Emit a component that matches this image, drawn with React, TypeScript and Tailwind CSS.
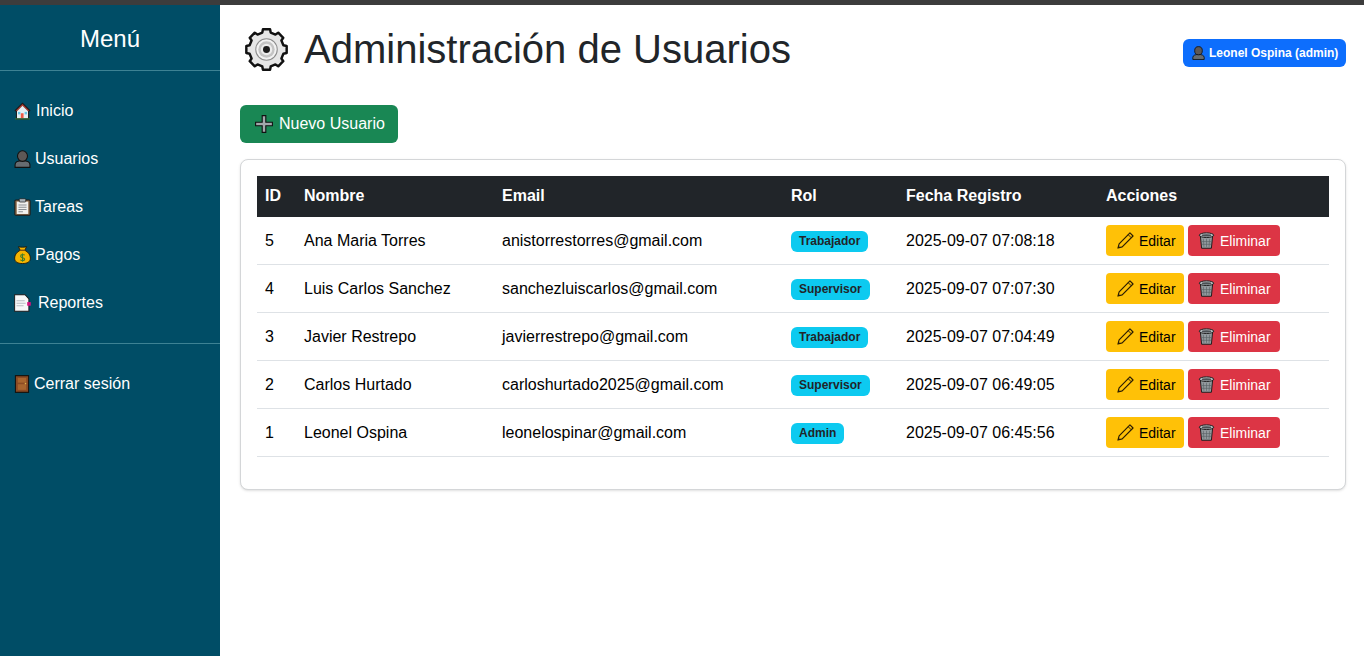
import React from 'react';

type IconProps = { className?: string };

const House = ({ className }: IconProps) => (
  <svg viewBox="0 0 16 16" preserveAspectRatio="none" className={className}>
    <path d="M8 .4 .4 7.6 1.8 8.6V15.6H14.2V8.6L15.6 7.6Z" fill="#1b1b1b" />
    <path d="M8 1.8 1.8 7.6 2.8 8.2 8 3.4 13.2 8.2 14.2 7.6Z" fill="#b23a2e" />
    <path d="M2.8 8.2 8 3.4 13.2 8.2V14.6H2.8Z" fill="#e4eef2" />
    <rect x="6.4" y="10" width="2.6" height="4.6" fill="#ef5a45" />
    <rect x="3.8" y="8.8" width="2.2" height="2.2" fill="#66c6e6" />
    <rect x="10" y="8.8" width="2.2" height="2.2" fill="#66c6e6" />
    <rect x="1" y="14.4" width="14" height="1.2" fill="#2f6b3a" />
  </svg>
);

const Bust = ({ className }: IconProps) => (
  <svg viewBox="0 0 16 16" preserveAspectRatio="none" className={className}>
    <path d="M1 15.4V13C1 10.8 4 9.6 8 9.6S15 10.8 15 13V15.4Z" fill="#666c71" stroke="#111" strokeWidth="1" />
    <circle cx="8" cy="5.4" r="4.7" fill="#5d5856" stroke="#111" strokeWidth="1" />
  </svg>
);

const Clipboard = ({ className }: IconProps) => (
  <svg viewBox="0 0 16 16" preserveAspectRatio="none" className={className}>
    <rect x=".8" y="1.8" width="14.4" height="13.6" rx="1" fill="#8a6a4a" stroke="#1a1a1a" strokeWidth="0.9" />
    <rect x="2.6" y="3.2" width="10.8" height="11" fill="#f1f1ee" />
    <rect x="5" y=".6" width="6" height="3" rx=".6" fill="#a9b2b8" stroke="#1a1a1a" strokeWidth="0.6" />
    <path d="M4.2 6.2H11.8M4.2 8.2H11.8M4.2 10.2H11.8M4.2 12.2H8.4" stroke="#8b9094" strokeWidth="1" />
  </svg>
);

const MoneyBag = ({ className }: IconProps) => (
  <svg viewBox="0 0 16 16" preserveAspectRatio="none" className={className}>
    <path d="M4.2 .6 5.8 3.8C2.2 5.6 .6 8.2 .6 10.8 .6 14.2 3.6 15.6 8 15.6S15.4 14.2 15.4 10.8C15.4 8.2 13.8 5.6 10.2 3.8L11.8 .6C9.6 1.2 6.4 1.2 4.2 .6Z" fill="#f4b400" stroke="#1c1408" strokeWidth="0.8" />
    <path d="M5.4 3.8H10.6" stroke="#7a4d12" strokeWidth="1.2" />
    <path d="M10 8.2C9.4 7.4 6.2 7.2 6.2 9 6.2 10.8 10 10 10 11.8 10 13.4 6.6 13.2 6 12.2M8 6.6V14" fill="none" stroke="#3f7d2c" strokeWidth="1" />
  </svg>
);

const Memo = ({ className }: IconProps) => (
  <svg viewBox="0 0 16 16" preserveAspectRatio="none" className={className}>
    <path d="M.6 .6H10.4L14 4.4V15.4H.6Z" fill="#f8f8f8" stroke="#1a1a1a" strokeWidth="0.9" />
    <path d="M2.4 6H10M2.4 8.2H11M2.4 10.4H9" stroke="#b9bdc2" strokeWidth="1" />
    <rect x="12.4" y="7.2" width="3.4" height="3.2" fill="#d6127e" />
  </svg>
);

const Door = ({ className }: IconProps) => (
  <svg viewBox="0 0 16 16" preserveAspectRatio="none" className={className}>
    <rect x="1.4" y=".6" width="13.2" height="14.8" fill="#8a4a24" stroke="#14100c" strokeWidth="1" />
    <rect x="3.8" y="2.6" width="8.4" height="4.2" fill="#a8652f" />
    <rect x="3.8" y="8.2" width="8.4" height="5" fill="#a8652f" />
    <rect x="10.8" y="7" width="1.4" height="1.2" fill="#e4b54a" />
  </svg>
);

// 8 dientes alrededor del centro (21, 21)
const gearPoints = Array.from({ length: 8 }, (_, k) => k * 45).flatMap((deg) =>
  [[17, -14], [20, -10], [20, 10], [17, 14]].map(([r, off]) => {
    const a = ((deg + off) * Math.PI) / 180;
    return `${(21 + r * Math.sin(a)).toFixed(2)},${(21 - r * Math.cos(a)).toFixed(2)}`;
  })
);

const Gear = ({ className }: IconProps) => (
  <svg viewBox="0 0 42 42" className={className}>
    <polygon points={gearPoints.join(' ')} fill="#e6e6e6" stroke="#111" strokeWidth="2.4" strokeLinejoin="round" />
    <circle cx="21" cy="21" r="10.5" fill="#f2f2f2" stroke="#8c8c8c" strokeWidth="1" />
    <circle cx="21" cy="21" r="8" fill="#c4c4c4" />
    <circle cx="21" cy="21" r="5.6" fill="#ececec" />
    <circle cx="21" cy="21" r="3.4" fill="#1c1c1c" />
  </svg>
);

const Plus = ({ className }: IconProps) => (
  <svg viewBox="0 0 18 18" className={className}>
    <path d="M7.2 .6H10.8V7.2H17.4V10.8H10.8V17.4H7.2V10.8H.6V7.2H7.2Z" fill="#a3a8ab" stroke="#111" strokeWidth="1.1" />
  </svg>
);

const Pencil = ({ className }: IconProps) => (
  <svg viewBox="0 0 16 16" className={className}>
    <path d="M12.2 .9 15.1 3.8 4.9 14 .9 15.1 2 11.1Z" fill="#ffc107" stroke="#2a1c04" strokeWidth="1.1" strokeLinejoin="round" />
    <path d="M10.6 2.6 13.4 5.4" stroke="#2a1c04" strokeWidth="0.9" />
    <path d="M.9 15.1 1.5 12.9 3.1 14.5Z" fill="#2a1c04" />
  </svg>
);

const Trash = ({ className }: IconProps) => (
  <svg viewBox="0 0 16 16" className={className}>
    <path d="M2.2 3.6 3.4 15.3H12.6L13.8 3.6Z" fill="#929a9e" stroke="#1a1a1a" strokeWidth="0.9" />
    <ellipse cx="8" cy="3" rx="6.8" ry="2.2" fill="#b3babe" stroke="#1a1a1a" strokeWidth="0.9" />
    <ellipse cx="8" cy="3.2" rx="4.4" ry="1" fill="#4a5054" />
    <path d="M5 6.4 5.6 14M8 6.4V14M11 6.4 10.4 14M3.4 9H12.6M3.6 11.6H12.4" stroke="#5a6165" strokeWidth="0.6" />
  </svg>
);

const menuItems = [
  { label: 'Inicio', icon: House, gapClass: 'ml-[5px]' },
  { label: 'Usuarios', icon: Bust, gapClass: 'ml-[4px]' },
  { label: 'Tareas', icon: Clipboard, gapClass: 'ml-[4px]' },
  { label: 'Pagos', icon: MoneyBag, gapClass: 'ml-[4px]' },
  { label: 'Reportes', icon: Memo, gapClass: 'ml-[7px]' },
];

const users = [
  { id: 5, name: 'Ana Maria Torres', email: 'anistorrestorres@gmail.com', role: 'Trabajador', date: '2025-09-07 07:08:18' },
  { id: 4, name: 'Luis Carlos Sanchez', email: 'sanchezluiscarlos@gmail.com', role: 'Supervisor', date: '2025-09-07 07:07:30' },
  { id: 3, name: 'Javier Restrepo', email: 'javierrestrepo@gmail.com', role: 'Trabajador', date: '2025-09-07 07:04:49' },
  { id: 2, name: 'Carlos Hurtado', email: 'carloshurtado2025@gmail.com', role: 'Supervisor', date: '2025-09-07 06:49:05' },
  { id: 1, name: 'Leonel Ospina', email: 'leonelospinar@gmail.com', role: 'Admin', date: '2025-09-07 06:45:56' },
];

export default function App() {
  return (
    <div className="h-[656px] overflow-hidden flex flex-col bg-white font-['Liberation_Sans',Arial,sans-serif] text-[#212529]">
      <div className="h-[5px] shrink-0 bg-[#3c3c3c]" />
      <div className="flex flex-1 min-h-0">
        <aside className="w-[220px] shrink-0 bg-[#004d66] text-white">
          <div className="h-[66px] border-b border-[#3d8294] text-center text-2xl leading-[67px]">Menú</div>
          <nav className="pt-4 pb-4 border-b border-[#3d8294]">
            {menuItems.map((item) => (
              <a key={item.label} className="flex items-center h-12 pl-[14px] text-base">
                <item.icon className="w-[17px] h-[18px] shrink-0" />
                <span className={item.gapClass}>{item.label}</span>
              </a>
            ))}
          </nav>
          <a className="flex items-center h-12 mt-4 pl-[14px] text-base">
            <Door className="w-[16px] h-[18px] shrink-0" />
            <span className="ml-[4px]">Cerrar sesión</span>
          </a>
        </aside>

        <main className="flex-1 min-w-0 pl-5 pr-[18px]">
          <div className="flex items-center justify-between h-[90px] pb-[2px] pl-[5px]">
            <div className="flex items-center">
              <Gear className="w-[43px] h-[43px]" />
              <h1 className="ml-4 text-[40px] leading-[48px] font-normal">Administración de Usuarios</h1>
            </div>
            <span className="flex items-center h-[28px] w-[163px] mt-2 pl-[9px] rounded-md bg-[#0d6efd] text-white text-xs font-bold">
              <Bust className="w-[13px] h-[14px] mr-[4px]" />
              Leonel Ospina (admin)
            </span>
          </div>

          <button className="flex items-center h-[38px] w-[158px] mt-[10px] pl-[15px] rounded-md bg-[#198754] text-white text-base">
            <Plus className="w-[18px] h-[18px] mr-[6px]" />
            Nuevo Usuario
          </button>

          <div className="mt-4 p-4 rounded-lg border border-[#d4d6d8] shadow-sm bg-white">
            <table className="w-full table-fixed border-separate border-spacing-0 mb-4 text-base">
              <colgroup>
                <col className="w-[39px]" />
                <col className="w-[198px]" />
                <col className="w-[289px]" />
                <col className="w-[115px]" />
                <col className="w-[200px]" />
                <col />
              </colgroup>
              <thead>
                <tr className="h-[41px] bg-[#212529] text-white text-left">
                  {['ID', 'Nombre', 'Email', 'Rol', 'Fecha Registro', 'Acciones'].map((h) => (
                    <th key={h} className="px-2 pb-[2px] font-bold">{h}</th>
                  ))}
                </tr>
              </thead>
              <tbody>
                {users.map((u) => (
                  <tr key={u.id} className="h-12 text-black">
                    <td className="px-2 border-b border-[#dee2e6]">{u.id}</td>
                    <td className="px-2 border-b border-[#dee2e6]">{u.name}</td>
                    <td className="px-2 border-b border-[#dee2e6]">{u.email}</td>
                    <td className="px-2 border-b border-[#dee2e6]">
                      <span className="inline-block h-[21px] px-2 rounded-md bg-[#0dcaf0] text-[#212529] text-xs font-bold leading-[21px] align-middle">
                        {u.role}
                      </span>
                    </td>
                    <td className="px-2 border-b border-[#dee2e6]">{u.date}</td>
                    <td className="px-2 border-b border-[#dee2e6]">
                      <div className="flex gap-1">
                        <button className="flex items-center h-[31px] w-[78px] pl-[11px] rounded bg-[#ffc107] text-black text-sm">
                          <Pencil className="w-[17px] h-[17px] mr-[5px]" />
                          Editar
                        </button>
                        <button className="flex items-center h-[31px] w-[92px] pl-[10px] rounded bg-[#dc3545] text-white text-sm">
                          <Trash className="w-[17px] h-[17px] mr-[5px]" />
                          Eliminar
                        </button>
                      </div>
                    </td>
                  </tr>
                ))}
              </tbody>
            </table>
          </div>
        </main>
      </div>
    </div>
  );
}
